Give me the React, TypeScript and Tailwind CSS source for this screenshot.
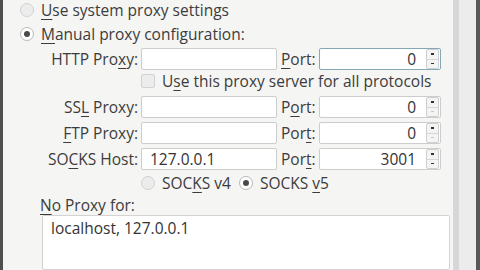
import React from "react";

const U = ({ children }: { children: React.ReactNode }) => (
  <span className="underline decoration-1 underline-offset-[3px]">{children}</span>
);

const Radio = ({ checked }: { checked?: boolean }) => (
  <span
    className={`w-[14px] h-[14px] rounded-full border flex items-center justify-center shrink-0 ${
      checked ? "border-[#b9b9b9] bg-white" : "border-[#d2d2d2] bg-[#ececec]"
    }`}
  >
    {checked && <span className="w-[6px] h-[6px] rounded-full bg-[#4a4a4a]" />}
  </span>
);

const Spinner = ({ downDisabled }: { downDisabled?: boolean }) => (
  <div className="w-[13px] h-[20px] mr-[1px] border border-[#cfcfcf] rounded-[2px] bg-[#f4f4f4] flex flex-col">
    <div className="flex-1 flex items-center justify-center border-b border-[#d6d6d6]">
      <span className="w-[3px] h-[2px] bg-[#333]" />
    </div>
    <div className="flex-1 flex items-center justify-center">
      <span className={`w-[3px] h-[1px] ${downDisabled ? "bg-[#c8c8c8]" : "bg-[#333]"}`} />
    </div>
  </div>
);

const Field = ({ value, className = "" }: { value?: string; className?: string }) => (
  <div
    className={`h-[22px] bg-white border border-[#cdcdcd] rounded-[2px] flex items-center px-[8px] text-[#333] ${className}`}
  >
    {value}
  </div>
);

const PortField = ({
  value,
  focused,
  downDisabled,
}: {
  value: string;
  focused?: boolean;
  downDisabled?: boolean;
}) => (
  <div
    className={`w-[122px] h-[22px] bg-white border rounded-[2px] flex items-center justify-end ${
      focused ? "border-[#86a9b8]" : "border-[#cdcdcd]"
    }`}
  >
    <span className="mr-[10px] text-[#333]">{value}</span>
    <Spinner downDisabled={downDisabled} />
  </div>
);

const ProxyRow = ({
  label,
  value,
  port,
  portLabel,
  focused,
  downDisabled,
}: {
  label: React.ReactNode;
  value?: string;
  port: string;
  portLabel: React.ReactNode;
  focused?: boolean;
  downDisabled?: boolean;
}) => (
  <div className="flex items-center h-[22px]">
    <div className="w-[138px] text-right pr-[3px] whitespace-nowrap">{label}</div>
    <Field value={value} className="w-[136px]" />
    <div className="w-[42px] pl-[4px]">{portLabel}</div>
    <PortField value={port} focused={focused} downDisabled={downDisabled} />
  </div>
);

export default function App() {
  return (
    <div
      className="w-[480px] h-[270px] overflow-hidden flex bg-[#f5f5f4] text-[15.5px] leading-[20px] text-[#3c3c3c]"
      style={{ fontFamily: '"Open Sans", "Noto Sans", sans-serif' }}
    >
      <div className="w-[3px] bg-[#4f4f4f] shrink-0" />
      <div className="w-[450px] shrink-0 flex flex-col">
        <div className="flex items-center h-[20px] pl-[17px] gap-[7px]">
          <Radio />
          <span>
            <U>U</U>se system proxy settings
          </span>
        </div>
        <div className="flex items-center h-[20px] mt-[4px] pl-[17px] gap-[7px]">
          <Radio checked />
          <span>
            <U>M</U>anual proxy configuration:
          </span>
        </div>

        <div className="mt-[4px]">
          <ProxyRow
            label={
              <>
                HTTP Pro<U>x</U>y:
              </>
            }
            portLabel={
              <>
                <U>P</U>ort:
              </>
            }
            port="0"
            focused
          />
        </div>

        <div className="flex items-center h-[20px] mt-[1px] pl-[138px] gap-[7px]">
          <span className="w-[14px] h-[14px] border border-[#d2d2d2] rounded-[2px] bg-[#ececec]" />
          <span>
            U<U>s</U>e this proxy server for all protocols
          </span>
        </div>

        <div className="mt-[5px] flex flex-col gap-[4px]">
          <ProxyRow
            label={
              <>
                SS<U>L</U> Proxy:
              </>
            }
            portLabel={
              <>
                P<U>o</U>rt:
              </>
            }
            port="0"
            downDisabled
          />
          <ProxyRow
            label={
              <>
                <U>F</U>TP Proxy:
              </>
            }
            portLabel={
              <>
                Por<U>t</U>:
              </>
            }
            port="0"
            downDisabled
          />
          <ProxyRow
            label={
              <>
                SO<U>C</U>KS Host:
              </>
            }
            value="127.0.0.1"
            portLabel={
              <>
                Por<U>t</U>:
              </>
            }
            port="3001"
          />
        </div>

        <div className="flex items-center h-[20px] mt-[3px] pl-[138px]">
          <Radio />
          <span className="ml-[7px]">
            SOC<U>K</U>S v4
          </span>
          <span className="ml-[8px]">
            <Radio checked />
          </span>
          <span className="ml-[7px]">
            SOCKS <U>v</U>5
          </span>
        </div>

        <div className="h-[20px] mt-[2px] pl-[37px] flex items-center">
          <span>
            <U>N</U>o Proxy for:
          </span>
        </div>
        <div className="ml-[39px] w-[408px] h-[60px] bg-white border border-[#d3d3d3] rounded-[2px] px-[8px] pt-[2px] text-[#333]">
          localhost, 127.0.0.1
        </div>
      </div>
      <div className="w-[6px] bg-[#d7d7d7] shrink-0" />
      <div className="w-[17px] bg-[#ececec] shrink-0" />
      <div className="flex-1 bg-[#585858]" />
    </div>
  );
}
